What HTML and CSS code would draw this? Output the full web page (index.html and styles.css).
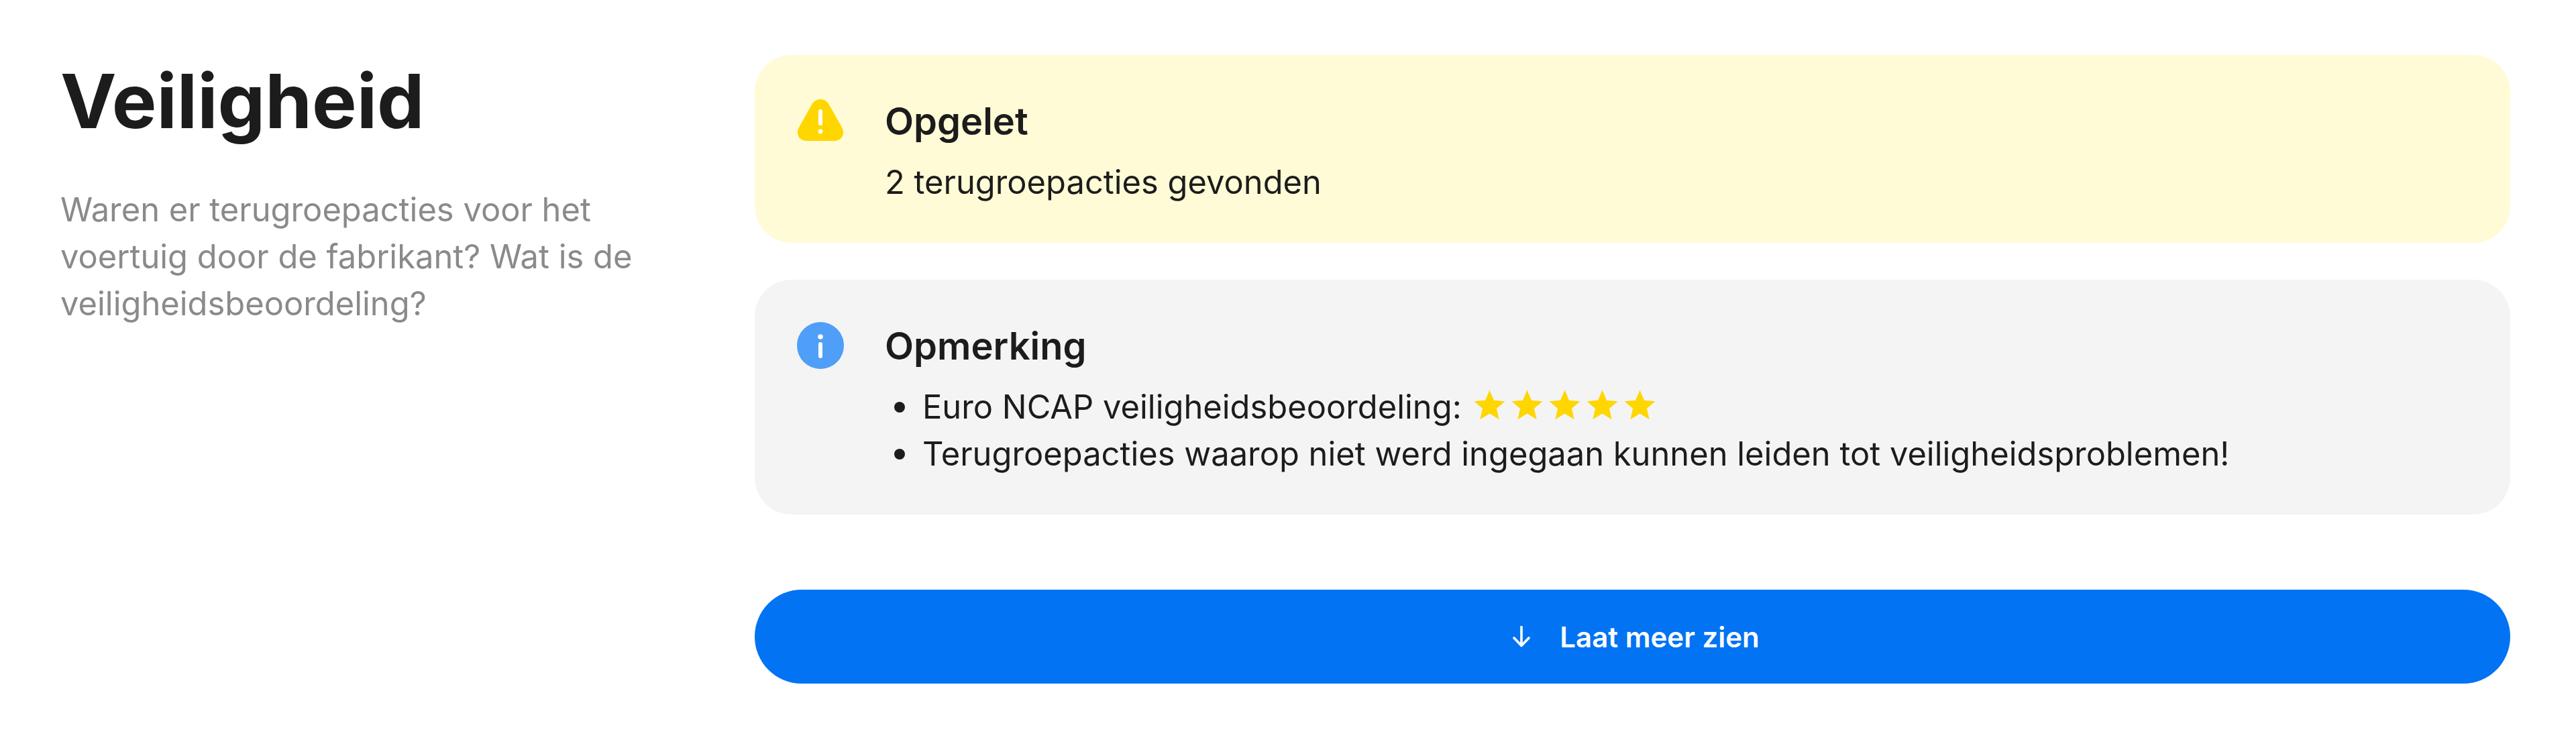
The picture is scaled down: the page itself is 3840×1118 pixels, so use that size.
FILE: index.html
```html
<!DOCTYPE html>
<html lang="nl">
<head>
<meta charset="utf-8">
<title>Veiligheid</title>
<link rel="stylesheet" href="styles.css">
</head>
<body>
<main class="section">
  <div class="intro">
    <h2 class="intro-title">Veiligheid</h2>
    <p class="intro-text">Waren er terugroepacties voor het voertuig door de fabrikant? Wat is de veiligheidsbeoordeling?</p>
  </div>
  <div class="content">
    <div class="alert alert-warning">
      <svg class="alert-icon" viewBox="0 0 70 70"><path class="warn-shape" d="M35 3c7 0 11 4 14 10l17 30c2 4 3 6 3 9 0 8-6 13-13 13H14C7 65 1 60 1 52c0-3 1-5 3-9l17-30C24 7 28 3 35 3Z"/><rect class="icon-mark" x="32" y="18" width="6" height="24" rx="3"/><circle class="icon-mark" cx="35" cy="51" r="3.4"/></svg>
      <div class="alert-body">
        <h3 class="alert-title">Opgelet</h3>
        <p class="alert-text">2 terugroepacties gevonden</p>
      </div>
    </div>
    <div class="alert alert-info">
      <svg class="alert-icon" viewBox="0 0 70 70"><circle class="info-shape" cx="35" cy="35" r="35"/><circle class="icon-mark" cx="35" cy="22" r="3.8"/><rect class="icon-mark" x="32" y="30" width="6" height="24" rx="3"/></svg>
      <div class="alert-body">
        <h3 class="alert-title">Opmerking</h3>
        <ul class="alert-list">
          <li>Euro NCAP veiligheidsbeoordeling:
            <span class="stars">
              <svg class="star" viewBox="0 0 24 24"><path d="M12 17.27L18.18 21l-1.64-7.03L22 9.24l-7.19-.61L12 2 9.19 8.63 2 9.24l5.46 4.73L5.82 21z"/></svg>
              <svg class="star" viewBox="0 0 24 24"><path d="M12 17.27L18.18 21l-1.64-7.03L22 9.24l-7.19-.61L12 2 9.19 8.63 2 9.24l5.46 4.73L5.82 21z"/></svg>
              <svg class="star" viewBox="0 0 24 24"><path d="M12 17.27L18.18 21l-1.64-7.03L22 9.24l-7.19-.61L12 2 9.19 8.63 2 9.24l5.46 4.73L5.82 21z"/></svg>
              <svg class="star" viewBox="0 0 24 24"><path d="M12 17.27L18.18 21l-1.64-7.03L22 9.24l-7.19-.61L12 2 9.19 8.63 2 9.24l5.46 4.73L5.82 21z"/></svg>
              <svg class="star" viewBox="0 0 24 24"><path d="M12 17.27L18.18 21l-1.64-7.03L22 9.24l-7.19-.61L12 2 9.19 8.63 2 9.24l5.46 4.73L5.82 21z"/></svg>
            </span>
          </li>
          <li>Terugroepacties waarop niet werd ingegaan kunnen leiden tot veiligheidsproblemen!</li>
        </ul>
      </div>
    </div>
    <button class="more" type="button">
      <svg class="more-icon" viewBox="0 0 26 32"><path d="M13 1.5v28M2 18l11 11.5L24 18"/></svg>
      <span>Laat meer zien</span>
    </button>
  </div>
</main>
</body>
</html>
```
FILE: styles.css
```css
* { box-sizing: border-box; }
html, body { margin: 0; padding: 0; background: #fff; }
body {
  font-family: Inter, "Liberation Sans", sans-serif;
  color: #1c1c1c;
  height: 1118px;
  overflow: hidden;
}
.section {
  display: flex;
  gap: 135px;
  padding: 82px 98px 0 90px;
}
.intro { width: 900px; flex: none; }
.intro-title {
  margin: -2px 0 0;
  font-size: 112px;
  line-height: 140px;
  font-weight: 700;
}
.intro-text {
  margin: 58px 0 0;
  font-size: 48.85px;
  line-height: 70px;
  color: #8a8a8a;
}
.content { flex: 1; display: flex; flex-direction: column; min-width: 0; }
.alert {
  display: flex;
  border-radius: 55px;
  padding: 55px 63px;
  gap: 61px;
}
.alert-warning { background: #fffbd6; }
.alert-info { background: #f4f4f4; margin-top: 55px; }
.alert-icon { width: 70px; height: 70px; flex: none; margin-top: 8px; }
.warn-shape { fill: #ffd600; }
.info-shape { fill: #4f9ef8; }
.icon-mark { fill: #fff; }
.alert-title {
  margin: 0 0 12px;
  font-size: 56px;
  line-height: 88px;
  font-weight: 600;
}
.alert-text { margin: 0; font-size: 48.85px; line-height: 70px; }
.alert-list { margin: 0; padding: 0 0 0 56px; list-style: none; font-size: 48.85px; line-height: 70px; }
.alert-list li { position: relative; }
.alert-list li::before {
  content: "";
  position: absolute;
  left: -42px;
  top: 27px;
  width: 16px;
  height: 16px;
  border-radius: 50%;
  background: #1c1c1c;
}
.stars { display: inline-flex; gap: 1px; vertical-align: -8px; }
.star { width: 55px; height: 55px; fill: #ffd600; }
.more {
  margin-top: 112px;
  height: 140px;
  padding-left: 17px;
  border: 0;
  border-radius: 70px;
  background: #0273f3;
  color: #fff;
  font: 600 42px Inter, "Liberation Sans", sans-serif;
  display: flex;
  align-items: center;
  justify-content: center;
  gap: 44px;
}
.more-icon { width: 26px; height: 32px; fill: none; stroke: #fff; stroke-width: 3.6; stroke-linecap: round; stroke-linejoin: round; }
```
